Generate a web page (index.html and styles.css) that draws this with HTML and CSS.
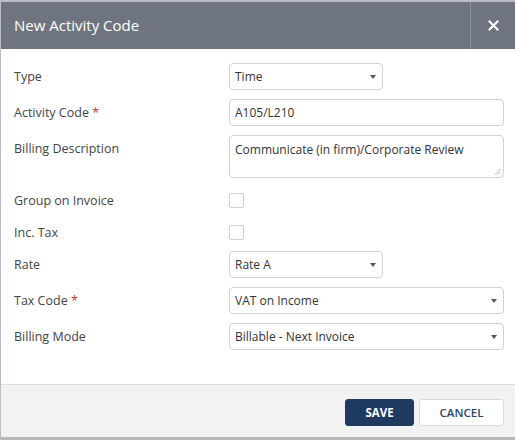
FILE: index.html
```html
<!DOCTYPE html>
<html>
<head>
<meta charset="utf-8">
<link rel="stylesheet" href="styles.css">
</head>
<body>
<div class="dialog">
  <div class="header">
    <div class="title">New Activity Code</div>
    <div class="close">
      <svg width="11" height="11" viewBox="0 0 11 11"><path d="M1.5 1.5 L9.5 9.5 M9.5 1.5 L1.5 9.5" stroke="#fff" stroke-width="2" stroke-linecap="square"/></svg>
    </div>
  </div>
  <div class="body">
    <div class="form">
      <div class="label">Type</div>
      <div class="ctrl"><div class="select short"><span>Time</span><i class="caret"></i></div></div>

      <div class="label">Activity Code <span class="req">*</span></div>
      <div class="ctrl"><div class="input">A105/L210</div></div>

      <div class="label">Billing Description</div>
      <div class="ctrl"><div class="textarea">Communicate (in firm)/Corporate Review<svg class="grip" width="7" height="7" viewBox="0 0 7 7"><path d="M6.5 1 L1 6.5 M6.5 4 L4 6.5" stroke="#999" stroke-width="0.8"/></svg></div></div>

      <div class="label cb">Group on Invoice</div>
      <div class="ctrl cbrow"><div class="check"></div></div>

      <div class="label cb">Inc. Tax</div>
      <div class="ctrl cbrow"><div class="check"></div></div>

      <div class="label">Rate</div>
      <div class="ctrl"><div class="select short"><span>Rate A</span><i class="caret"></i></div></div>

      <div class="label">Tax Code <span class="req">*</span></div>
      <div class="ctrl"><div class="select"><span>VAT on Income</span><i class="caret"></i></div></div>

      <div class="label">Billing Mode</div>
      <div class="ctrl"><div class="select"><span>Billable - Next Invoice</span><i class="caret"></i></div></div>
    </div>
  </div>
  <div class="footer">
    <button class="btn save">SAVE</button>
    <button class="btn cancel">CANCEL</button>
  </div>
</div>
</body>
</html>
```

FILE: styles.css
```css
html, body {
  margin: 0;
  padding: 0;
  background: #b9bec5;
}
body {
  width: 515px;
  height: 440px;
  overflow: hidden;
  font-family: "Open Sans", "Noto Sans", sans-serif;
}
.dialog {
  margin-top: 2px;
  margin-left: 1px;
  width: 514px;
  background: #fff;
  border-bottom: 3px solid #b7b7b7;
}
.header {
  height: 47px;
  background: #6f7580;
  display: flex;
  align-items: stretch;
}
.title {
  flex: 1;
  color: #fff;
  font-size: 15px;
  line-height: 47px;
  padding-left: 13px;
}
.close {
  width: 44px;
  border-left: 1px solid #8c929b;
  display: flex;
  align-items: center;
  justify-content: center;
}
.body {
  padding: 14px 11px 34px 13px;
}
.form {
  display: grid;
  grid-template-columns: 215px 1fr;
  row-gap: 9px;
  align-items: start;
}
.label {
  font-size: 12.5px;
  color: #444;
  line-height: 27px;
  white-space: nowrap;
}
.label.cb {
  line-height: 15px;
  padding-top: 6px;
  height: 17px;
}
.req {
  color: #c0392b;
}
.ctrl {
  font-size: 12px;
  color: #333;
}
.cbrow {
  height: 23px;
  padding-top: 6px;
  box-sizing: border-box;
}
.check {
  width: 15px;
  height: 15px;
  box-sizing: border-box;
  border: 1px solid #cfcfcf;
  border-radius: 2px;
  background: #fff;
}
.select, .input, .textarea {
  box-sizing: border-box;
  border: 1px solid #d2d2d2;
  border-radius: 4px;
  background: #fff;
  padding-left: 5px;
  height: 27px;
  line-height: 25px;
}
.select {
  display: flex;
  align-items: center;
  justify-content: space-between;
  padding-right: 6px;
}
.select.short {
  width: 154px;
}
.caret {
  width: 0;
  height: 0;
  border-left: 3.5px solid transparent;
  border-right: 3.5px solid transparent;
  border-top: 4px solid #555;
}
.textarea {
  position: relative;
  height: 43px;
  line-height: 18px;
  padding-top: 5px;
}
.grip {
  position: absolute;
  right: 2px;
  bottom: 2px;
}
.footer {
  border-top: 1px solid #dcdcdc;
  background: #f2f2f2;
  padding: 14px 11px 11px 0;
  display: flex;
  justify-content: flex-end;
  gap: 5px;
}
.btn {
  height: 27px;
  box-sizing: border-box;
  font-family: "Open Sans", "Noto Sans", sans-serif;
  font-size: 11.5px;
  border-radius: 3px;
  padding: 0;
  cursor: pointer;
}
.save {
  width: 69px;
  background: #1f3a5f;
  color: #fff;
  border: 1px solid #1f3a5f;
  font-weight: 700;
}
.cancel {
  width: 85px;
  background: #fff;
  color: #2e4466;
  border: 1px solid #dadada;
  font-weight: 600;
}
```
